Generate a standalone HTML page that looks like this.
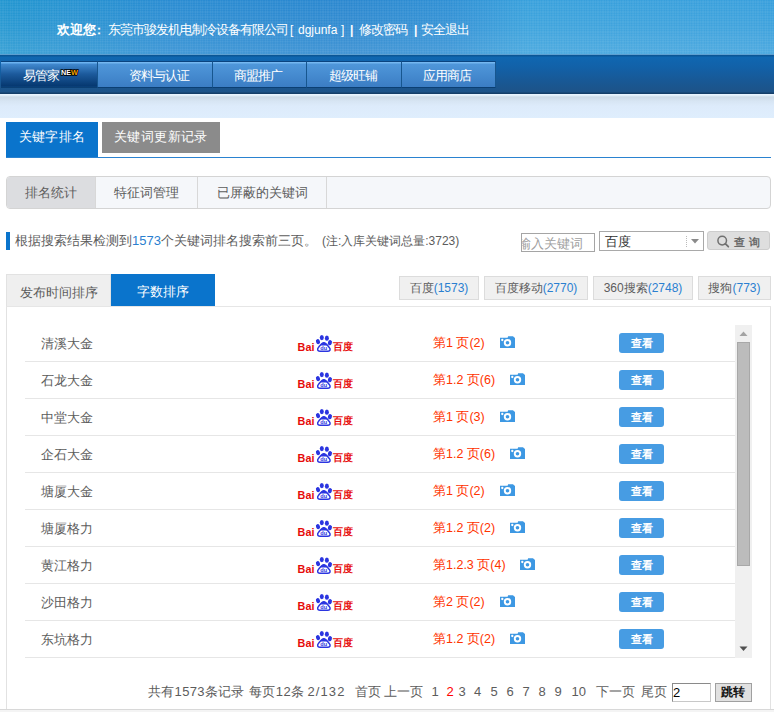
<!DOCTYPE html>
<html><head><meta charset="utf-8">
<style>
*{margin:0;padding:0;box-sizing:border-box}
html,body{width:774px;height:712px;overflow:hidden;background:#fff}
body{position:relative;font-family:"Liberation Sans",sans-serif;font-size:13px;color:#5c5c5c}
.abs{position:absolute}
#hdr{left:0;top:0;width:774px;height:55px;background:repeating-linear-gradient(90deg,rgba(255,255,255,.045) 0 1px,transparent 1px 2.5px),repeating-linear-gradient(0deg,rgba(255,255,255,.045) 0 1px,transparent 1px 2.5px),linear-gradient(180deg,rgba(255,255,255,0) 0,rgba(255,255,255,.04) 50%,rgba(255,255,255,.12) 100%),linear-gradient(90deg,#2296d0 0%,#2a8cd2 22%,#2a87cf 45%,#2e8fd4 58%,#37a0dc 68%,#389fdc 100%)}
#hdr .tx{left:57px;top:21px;color:#fff;font-size:12px;line-height:18px;white-space:nowrap}
#hline{left:0;top:54px;width:774px;height:1px;background:#5d9fd0}
#nav{left:0;top:55px;width:774px;height:39px;background:linear-gradient(180deg,#0a5696 0,#0a5696 1px,#0f67b1 2px,#1261a8 12px,#1a5690 30px,#1d5388 37px,#153f69 38px)}
.ni{top:61px;height:27px;border-top:1px solid #0a4480;border-bottom:1px solid #0b3f73;border-right:1px solid #17568f;background:linear-gradient(180deg,#74b7f0 0,#74b7f0 1px,#4f97da 2px,#3b7dc4 25px)}
.nt{top:65px;color:#fff;font-size:13px;letter-spacing:-1px;line-height:22px;white-space:nowrap}
.ni.on{background:linear-gradient(180deg,#6cb3f0 0,#6cb3f0 1px,#4189cf 2px,#1c5a9c 12px,#063870 24px,#0b4580 25px)}
#band{left:0;top:94px;width:774px;height:24px;background:linear-gradient(180deg,#e8f4ff 0,#e8f4ff 1px,#cddbe8 3px,#d7e5f3 7px,#ddebfb 12px,#dfeefd 24px)}
.t1{top:122px;height:35px;background:#0a74cc;color:#fff;font-size:13px;letter-spacing:.4px;line-height:30px;text-align:center}
.t2{top:122px;height:31px;background:#8b8b8b;color:#fff;font-size:13px;letter-spacing:.4px;line-height:30px;text-align:center}
#bl{left:6px;top:157px;width:765px;height:1px;background:#2a82d0}
#sub{left:6px;top:176px;width:765px;height:33px;border:1px solid #d4d4d4;border-radius:4px;background:#f5f7fa;overflow:hidden}
.st{top:0;height:31px;line-height:31px;text-align:center;border-right:1px solid #d8d8d8;color:#5c5c5c}
#info{left:15px;top:232px;line-height:18px;white-space:nowrap;color:#5c5c5c}
#info .b{color:#2a7fd0}
#info small{font-size:12px;margin-left:5px}
#mark{left:6px;top:232px;width:4px;height:18px;background:#0a74cc}
#kw{left:521px;top:233px;width:74px;height:19px;border:1px solid #a5a5a5;overflow:hidden;color:#a0a0a0;font-size:13px;line-height:19px;white-space:nowrap;text-indent:-4px}
#sel{left:599px;top:231px;width:105px;height:20px;border:1px solid #a9a9a9;font-size:13px;line-height:20px;padding-left:5px;color:#333}
#qbtn{left:707px;top:231px;width:63px;height:19px;border:1px solid #cdcdcd;border-radius:3px;background:#dedede;color:#555;font-size:12px;font-weight:bold;line-height:17px}
.sort{top:274px;height:32px;line-height:32px;padding-top:2px;font-size:13px;text-align:center}
.eb{top:276px;height:24px;line-height:22px;border:1px solid #dcdcdc;background:#f0f0f0;font-size:12px;text-align:center;color:#5c5c5c;white-space:nowrap}
.eb span{color:#2a7fd0}
#box{left:6px;top:306px;width:765px;height:404px;border:1px solid #e2e2e2;border-top:1px solid #e6e6e6}
.row{left:25px;width:710px;height:37px;border-bottom:1px solid #e6e6e6}
.nm{left:41px;height:36px;line-height:38px;color:#5c5c5c}
.rk{left:433px;height:36px;line-height:37px;color:#ff3300;font-size:12.5px}
.vb{left:619px;width:45px;height:20px;line-height:20px;border-radius:3px;background:#479ce3;color:#fff;font-size:11px;font-weight:bold;text-align:center}
#sb{left:735px;top:325px;width:17px;height:333px;background:#f0f0f0}
#thumb{left:737px;top:342px;width:13px;height:224px;background:#bcbcbc;border:1px solid #a8a8a8}
.pg{top:683px;line-height:18px;white-space:nowrap;color:#5c5c5c}
.pg.on{color:#f00}
#pgi{left:672px;top:683px;width:39px;height:19px;border:1px solid #8a8a8a;border-right-color:#c8c8c8;border-bottom-color:#c8c8c8;font-size:13px;color:#000;line-height:17px;padding-left:0}
#jb{left:715px;top:683px;width:37px;height:19px;border:1px solid #a0a0a0;background:#e1e1e1;font-size:12px;font-weight:bold;color:#111;line-height:17px;text-align:center;text-indent:-2px;letter-spacing:-.5px}
#btm{left:0;top:709px;width:774px;height:3px;background:#f4f4f4;border-top:1px solid #d8d8d8}
</style></head><body>
<div id="hdr" class="abs">
<div class="abs tx" style="left:57px;font-size:13px;font-weight:bold">欢迎您</div>
<div class="abs tx" style="left:93px;font-weight:bold">：</div>
<div class="abs tx" style="left:108px;font-size:13px;letter-spacing:-1px">东莞市骏发机电制冷设备有限公司</div>
<div class="abs tx" style="left:290px">[</div>
<div class="abs tx" style="left:298px">dgjunfa</div>
<div class="abs tx" style="left:341px">]</div>
<div class="abs tx" style="left:350px;font-weight:bold">|</div>
<div class="abs tx" style="left:359px;font-size:13px;letter-spacing:-1px">修改密码</div>
<div class="abs tx" style="left:414px;font-weight:bold">|</div>
<div class="abs tx" style="left:421px;font-size:13px;letter-spacing:-1px">安全退出</div>
</div>
<div id="hline" class="abs"></div>
<div id="nav" class="abs"></div>
<div class="abs ni on" style="left:1px;width:97px"></div>
<div class="abs ni" style="left:98px;width:115px"></div>
<div class="abs ni" style="left:213px;width:94px"></div>
<div class="abs ni" style="left:307px;width:95px"></div>
<div class="abs ni" style="left:402px;width:94px"></div>
<div class="abs nt" style="left:23px">易管家</div>
<div class="abs nt" style="left:129px">资料与认证</div>
<div class="abs nt" style="left:234px">商盟推广</div>
<div class="abs nt" style="left:329px">超级旺铺</div>
<div class="abs nt" style="left:423px">应用商店</div>
<svg class="abs" style="left:59px;top:68px" width="22" height="10" viewBox="0 0 22 10"><text x="2" y="7.1" font-family="Liberation Sans" font-weight="bold" font-size="6.6" fill="#fff" stroke="#000" stroke-width="1.5" paint-order="stroke" textLength="17" lengthAdjust="spacingAndGlyphs">NE<tspan fill="#f7a400">W</tspan></text></svg>
<div id="band" class="abs"></div>
<div class="abs t1" style="left:6px;width:92px">关键字排名</div>
<div class="abs t2" style="left:102px;width:118px">关键词更新记录</div>
<div id="bl" class="abs"></div>
<div id="sub" class="abs">
 <div class="abs st" style="left:0;width:89px;background:#dcdde0">排名统计</div>
 <div class="abs st" style="left:89px;width:102px">特征词管理</div>
 <div class="abs st" style="left:191px;width:129px">已屏蔽的关键词</div>
</div>
<div id="mark" class="abs"></div>
<div id="info" class="abs">根据搜索结果检测到<span class="b">1573</span>个关键词排名搜索前三页。<small>(注:入库关键词总量:3723)</small></div>
<div id="kw" class="abs">输入关键词</div>
<div id="sel" class="abs">百度</div>
<div class="abs" style="left:686px;top:236px;width:1px;height:11px;border-left:1px dotted #bbb"></div>
<svg class="abs" style="left:691px;top:239px" width="9" height="5"><path d="M0 0h8l-4 4.5z" fill="#8a8a8a"/></svg>
<div id="qbtn" class="abs"></div>
<svg class="abs" style="left:716px;top:234px" width="14" height="14" viewBox="0 0 14 14"><circle cx="6.2" cy="6.6" r="4.3" fill="none" stroke="#707070" stroke-width="1.5"/><path d="M9.3 9.7l3 3" stroke="#707070" stroke-width="1.8" stroke-linecap="round"/></svg>
<div class="abs" style="left:734px;top:233px;font-size:11px;font-weight:bold;color:#6a6a6a;line-height:18px;letter-spacing:4px">查询</div>
<div id="box" class="abs"></div>
<div class="abs sort" style="left:6px;top:274px;width:105px;height:32px;background:#efefef;border:1px solid #e2e2e2;border-bottom:none;color:#5c5c5c">发布时间排序</div>
<div class="abs sort" style="left:111px;width:104px;background:#0a74cc;color:#fff">字数排序</div>
<div class="abs eb" style="left:399px;width:80px">百度<span>(1573)</span></div>
<div class="abs eb" style="left:484px;width:104px">百度移动<span>(2770)</span></div>
<div class="abs eb" style="left:593px;width:100px">360搜索<span>(2748)</span></div>
<div class="abs eb" style="left:698px;width:73px">搜狗<span>(773)</span></div>
<div class="abs row" style="top:325px"></div>
<div class="abs nm" style="top:325px">清溪大金</div>
<svg class="abs" style="left:297px;top:334px" width="56" height="19" viewBox="0 0 56 19">
<text x="0.6" y="17" font-family="Liberation Sans" font-weight="bold" font-size="10.8" fill="#e60b0b">Bai</text>
<g fill="#2b35e0"><ellipse cx="21" cy="7.6" rx="2" ry="2.6" transform="rotate(-20 21 7.6)"/><ellipse cx="24.8" cy="3.6" rx="2" ry="2.6"/><ellipse cx="29.9" cy="4.2" rx="2" ry="2.6"/><ellipse cx="32.9" cy="8.7" rx="2" ry="2.6" transform="rotate(20 32.9 8.7)"/></g>
<path d="M26.8 8.8C24.8 8.8 23.3 11.2 21.6 13.3C19.9 15.3 20.5 17.3 22.8 17.3H31C33.3 17.3 33.8 15.3 32.1 13.3C30.4 11.2 28.8 8.8 26.8 8.8z" fill="#fff" stroke="#2b35e0" stroke-width="1.5"/>
<path d="M26.8 8.6C25.3 8.6 24.2 10 23.1 11.4H30.5C29.4 10 28.3 8.6 26.8 8.6z" fill="#2b35e0"/>
<text x="23.3" y="16.4" font-family="Liberation Sans" font-size="5.6" fill="#2b35e0" font-weight="bold">du</text>
<text x="35.5" y="16.1" font-family="Liberation Sans, sans-serif" font-size="9.5" fill="#e60b0b" font-weight="bold">百度</text></svg>
<div class="abs rk" style="top:325px">第1 页(2)</div>
<svg class="abs" style="left:500px;top:336px" width="16" height="13" viewBox="0 0 16 13">
<path d="M0 1.8h7.6l0.5-1.6h4.9l1.6 1.6h0.4v10.1H0z" fill="#3d98e3"/>
<circle cx="2.3" cy="4" r="1.15" fill="#fff"/>
<circle cx="7.5" cy="6.8" r="2.75" fill="none" stroke="#fff" stroke-width="1.9"/></svg>
<div class="abs vb" style="top:333px">查看</div>
<div class="abs row" style="top:362px"></div>
<div class="abs nm" style="top:362px">石龙大金</div>
<svg class="abs" style="left:297px;top:371px" width="56" height="19" viewBox="0 0 56 19">
<text x="0.6" y="17" font-family="Liberation Sans" font-weight="bold" font-size="10.8" fill="#e60b0b">Bai</text>
<g fill="#2b35e0"><ellipse cx="21" cy="7.6" rx="2" ry="2.6" transform="rotate(-20 21 7.6)"/><ellipse cx="24.8" cy="3.6" rx="2" ry="2.6"/><ellipse cx="29.9" cy="4.2" rx="2" ry="2.6"/><ellipse cx="32.9" cy="8.7" rx="2" ry="2.6" transform="rotate(20 32.9 8.7)"/></g>
<path d="M26.8 8.8C24.8 8.8 23.3 11.2 21.6 13.3C19.9 15.3 20.5 17.3 22.8 17.3H31C33.3 17.3 33.8 15.3 32.1 13.3C30.4 11.2 28.8 8.8 26.8 8.8z" fill="#fff" stroke="#2b35e0" stroke-width="1.5"/>
<path d="M26.8 8.6C25.3 8.6 24.2 10 23.1 11.4H30.5C29.4 10 28.3 8.6 26.8 8.6z" fill="#2b35e0"/>
<text x="23.3" y="16.4" font-family="Liberation Sans" font-size="5.6" fill="#2b35e0" font-weight="bold">du</text>
<text x="35.5" y="16.1" font-family="Liberation Sans, sans-serif" font-size="9.5" fill="#e60b0b" font-weight="bold">百度</text></svg>
<div class="abs rk" style="top:362px">第1.2 页(6)</div>
<svg class="abs" style="left:510px;top:373px" width="16" height="13" viewBox="0 0 16 13">
<path d="M0 1.8h7.6l0.5-1.6h4.9l1.6 1.6h0.4v10.1H0z" fill="#3d98e3"/>
<circle cx="2.3" cy="4" r="1.15" fill="#fff"/>
<circle cx="7.5" cy="6.8" r="2.75" fill="none" stroke="#fff" stroke-width="1.9"/></svg>
<div class="abs vb" style="top:370px">查看</div>
<div class="abs row" style="top:399px"></div>
<div class="abs nm" style="top:399px">中堂大金</div>
<svg class="abs" style="left:297px;top:408px" width="56" height="19" viewBox="0 0 56 19">
<text x="0.6" y="17" font-family="Liberation Sans" font-weight="bold" font-size="10.8" fill="#e60b0b">Bai</text>
<g fill="#2b35e0"><ellipse cx="21" cy="7.6" rx="2" ry="2.6" transform="rotate(-20 21 7.6)"/><ellipse cx="24.8" cy="3.6" rx="2" ry="2.6"/><ellipse cx="29.9" cy="4.2" rx="2" ry="2.6"/><ellipse cx="32.9" cy="8.7" rx="2" ry="2.6" transform="rotate(20 32.9 8.7)"/></g>
<path d="M26.8 8.8C24.8 8.8 23.3 11.2 21.6 13.3C19.9 15.3 20.5 17.3 22.8 17.3H31C33.3 17.3 33.8 15.3 32.1 13.3C30.4 11.2 28.8 8.8 26.8 8.8z" fill="#fff" stroke="#2b35e0" stroke-width="1.5"/>
<path d="M26.8 8.6C25.3 8.6 24.2 10 23.1 11.4H30.5C29.4 10 28.3 8.6 26.8 8.6z" fill="#2b35e0"/>
<text x="23.3" y="16.4" font-family="Liberation Sans" font-size="5.6" fill="#2b35e0" font-weight="bold">du</text>
<text x="35.5" y="16.1" font-family="Liberation Sans, sans-serif" font-size="9.5" fill="#e60b0b" font-weight="bold">百度</text></svg>
<div class="abs rk" style="top:399px">第1 页(3)</div>
<svg class="abs" style="left:500px;top:410px" width="16" height="13" viewBox="0 0 16 13">
<path d="M0 1.8h7.6l0.5-1.6h4.9l1.6 1.6h0.4v10.1H0z" fill="#3d98e3"/>
<circle cx="2.3" cy="4" r="1.15" fill="#fff"/>
<circle cx="7.5" cy="6.8" r="2.75" fill="none" stroke="#fff" stroke-width="1.9"/></svg>
<div class="abs vb" style="top:407px">查看</div>
<div class="abs row" style="top:436px"></div>
<div class="abs nm" style="top:436px">企石大金</div>
<svg class="abs" style="left:297px;top:445px" width="56" height="19" viewBox="0 0 56 19">
<text x="0.6" y="17" font-family="Liberation Sans" font-weight="bold" font-size="10.8" fill="#e60b0b">Bai</text>
<g fill="#2b35e0"><ellipse cx="21" cy="7.6" rx="2" ry="2.6" transform="rotate(-20 21 7.6)"/><ellipse cx="24.8" cy="3.6" rx="2" ry="2.6"/><ellipse cx="29.9" cy="4.2" rx="2" ry="2.6"/><ellipse cx="32.9" cy="8.7" rx="2" ry="2.6" transform="rotate(20 32.9 8.7)"/></g>
<path d="M26.8 8.8C24.8 8.8 23.3 11.2 21.6 13.3C19.9 15.3 20.5 17.3 22.8 17.3H31C33.3 17.3 33.8 15.3 32.1 13.3C30.4 11.2 28.8 8.8 26.8 8.8z" fill="#fff" stroke="#2b35e0" stroke-width="1.5"/>
<path d="M26.8 8.6C25.3 8.6 24.2 10 23.1 11.4H30.5C29.4 10 28.3 8.6 26.8 8.6z" fill="#2b35e0"/>
<text x="23.3" y="16.4" font-family="Liberation Sans" font-size="5.6" fill="#2b35e0" font-weight="bold">du</text>
<text x="35.5" y="16.1" font-family="Liberation Sans, sans-serif" font-size="9.5" fill="#e60b0b" font-weight="bold">百度</text></svg>
<div class="abs rk" style="top:436px">第1.2 页(6)</div>
<svg class="abs" style="left:510px;top:447px" width="16" height="13" viewBox="0 0 16 13">
<path d="M0 1.8h7.6l0.5-1.6h4.9l1.6 1.6h0.4v10.1H0z" fill="#3d98e3"/>
<circle cx="2.3" cy="4" r="1.15" fill="#fff"/>
<circle cx="7.5" cy="6.8" r="2.75" fill="none" stroke="#fff" stroke-width="1.9"/></svg>
<div class="abs vb" style="top:444px">查看</div>
<div class="abs row" style="top:473px"></div>
<div class="abs nm" style="top:473px">塘厦大金</div>
<svg class="abs" style="left:297px;top:482px" width="56" height="19" viewBox="0 0 56 19">
<text x="0.6" y="17" font-family="Liberation Sans" font-weight="bold" font-size="10.8" fill="#e60b0b">Bai</text>
<g fill="#2b35e0"><ellipse cx="21" cy="7.6" rx="2" ry="2.6" transform="rotate(-20 21 7.6)"/><ellipse cx="24.8" cy="3.6" rx="2" ry="2.6"/><ellipse cx="29.9" cy="4.2" rx="2" ry="2.6"/><ellipse cx="32.9" cy="8.7" rx="2" ry="2.6" transform="rotate(20 32.9 8.7)"/></g>
<path d="M26.8 8.8C24.8 8.8 23.3 11.2 21.6 13.3C19.9 15.3 20.5 17.3 22.8 17.3H31C33.3 17.3 33.8 15.3 32.1 13.3C30.4 11.2 28.8 8.8 26.8 8.8z" fill="#fff" stroke="#2b35e0" stroke-width="1.5"/>
<path d="M26.8 8.6C25.3 8.6 24.2 10 23.1 11.4H30.5C29.4 10 28.3 8.6 26.8 8.6z" fill="#2b35e0"/>
<text x="23.3" y="16.4" font-family="Liberation Sans" font-size="5.6" fill="#2b35e0" font-weight="bold">du</text>
<text x="35.5" y="16.1" font-family="Liberation Sans, sans-serif" font-size="9.5" fill="#e60b0b" font-weight="bold">百度</text></svg>
<div class="abs rk" style="top:473px">第1 页(2)</div>
<svg class="abs" style="left:500px;top:484px" width="16" height="13" viewBox="0 0 16 13">
<path d="M0 1.8h7.6l0.5-1.6h4.9l1.6 1.6h0.4v10.1H0z" fill="#3d98e3"/>
<circle cx="2.3" cy="4" r="1.15" fill="#fff"/>
<circle cx="7.5" cy="6.8" r="2.75" fill="none" stroke="#fff" stroke-width="1.9"/></svg>
<div class="abs vb" style="top:481px">查看</div>
<div class="abs row" style="top:510px"></div>
<div class="abs nm" style="top:510px">塘厦格力</div>
<svg class="abs" style="left:297px;top:519px" width="56" height="19" viewBox="0 0 56 19">
<text x="0.6" y="17" font-family="Liberation Sans" font-weight="bold" font-size="10.8" fill="#e60b0b">Bai</text>
<g fill="#2b35e0"><ellipse cx="21" cy="7.6" rx="2" ry="2.6" transform="rotate(-20 21 7.6)"/><ellipse cx="24.8" cy="3.6" rx="2" ry="2.6"/><ellipse cx="29.9" cy="4.2" rx="2" ry="2.6"/><ellipse cx="32.9" cy="8.7" rx="2" ry="2.6" transform="rotate(20 32.9 8.7)"/></g>
<path d="M26.8 8.8C24.8 8.8 23.3 11.2 21.6 13.3C19.9 15.3 20.5 17.3 22.8 17.3H31C33.3 17.3 33.8 15.3 32.1 13.3C30.4 11.2 28.8 8.8 26.8 8.8z" fill="#fff" stroke="#2b35e0" stroke-width="1.5"/>
<path d="M26.8 8.6C25.3 8.6 24.2 10 23.1 11.4H30.5C29.4 10 28.3 8.6 26.8 8.6z" fill="#2b35e0"/>
<text x="23.3" y="16.4" font-family="Liberation Sans" font-size="5.6" fill="#2b35e0" font-weight="bold">du</text>
<text x="35.5" y="16.1" font-family="Liberation Sans, sans-serif" font-size="9.5" fill="#e60b0b" font-weight="bold">百度</text></svg>
<div class="abs rk" style="top:510px">第1.2 页(2)</div>
<svg class="abs" style="left:510px;top:521px" width="16" height="13" viewBox="0 0 16 13">
<path d="M0 1.8h7.6l0.5-1.6h4.9l1.6 1.6h0.4v10.1H0z" fill="#3d98e3"/>
<circle cx="2.3" cy="4" r="1.15" fill="#fff"/>
<circle cx="7.5" cy="6.8" r="2.75" fill="none" stroke="#fff" stroke-width="1.9"/></svg>
<div class="abs vb" style="top:518px">查看</div>
<div class="abs row" style="top:547px"></div>
<div class="abs nm" style="top:547px">黄江格力</div>
<svg class="abs" style="left:297px;top:556px" width="56" height="19" viewBox="0 0 56 19">
<text x="0.6" y="17" font-family="Liberation Sans" font-weight="bold" font-size="10.8" fill="#e60b0b">Bai</text>
<g fill="#2b35e0"><ellipse cx="21" cy="7.6" rx="2" ry="2.6" transform="rotate(-20 21 7.6)"/><ellipse cx="24.8" cy="3.6" rx="2" ry="2.6"/><ellipse cx="29.9" cy="4.2" rx="2" ry="2.6"/><ellipse cx="32.9" cy="8.7" rx="2" ry="2.6" transform="rotate(20 32.9 8.7)"/></g>
<path d="M26.8 8.8C24.8 8.8 23.3 11.2 21.6 13.3C19.9 15.3 20.5 17.3 22.8 17.3H31C33.3 17.3 33.8 15.3 32.1 13.3C30.4 11.2 28.8 8.8 26.8 8.8z" fill="#fff" stroke="#2b35e0" stroke-width="1.5"/>
<path d="M26.8 8.6C25.3 8.6 24.2 10 23.1 11.4H30.5C29.4 10 28.3 8.6 26.8 8.6z" fill="#2b35e0"/>
<text x="23.3" y="16.4" font-family="Liberation Sans" font-size="5.6" fill="#2b35e0" font-weight="bold">du</text>
<text x="35.5" y="16.1" font-family="Liberation Sans, sans-serif" font-size="9.5" fill="#e60b0b" font-weight="bold">百度</text></svg>
<div class="abs rk" style="top:547px">第1.2.3 页(4)</div>
<svg class="abs" style="left:520px;top:558px" width="16" height="13" viewBox="0 0 16 13">
<path d="M0 1.8h7.6l0.5-1.6h4.9l1.6 1.6h0.4v10.1H0z" fill="#3d98e3"/>
<circle cx="2.3" cy="4" r="1.15" fill="#fff"/>
<circle cx="7.5" cy="6.8" r="2.75" fill="none" stroke="#fff" stroke-width="1.9"/></svg>
<div class="abs vb" style="top:555px">查看</div>
<div class="abs row" style="top:584px"></div>
<div class="abs nm" style="top:584px">沙田格力</div>
<svg class="abs" style="left:297px;top:593px" width="56" height="19" viewBox="0 0 56 19">
<text x="0.6" y="17" font-family="Liberation Sans" font-weight="bold" font-size="10.8" fill="#e60b0b">Bai</text>
<g fill="#2b35e0"><ellipse cx="21" cy="7.6" rx="2" ry="2.6" transform="rotate(-20 21 7.6)"/><ellipse cx="24.8" cy="3.6" rx="2" ry="2.6"/><ellipse cx="29.9" cy="4.2" rx="2" ry="2.6"/><ellipse cx="32.9" cy="8.7" rx="2" ry="2.6" transform="rotate(20 32.9 8.7)"/></g>
<path d="M26.8 8.8C24.8 8.8 23.3 11.2 21.6 13.3C19.9 15.3 20.5 17.3 22.8 17.3H31C33.3 17.3 33.8 15.3 32.1 13.3C30.4 11.2 28.8 8.8 26.8 8.8z" fill="#fff" stroke="#2b35e0" stroke-width="1.5"/>
<path d="M26.8 8.6C25.3 8.6 24.2 10 23.1 11.4H30.5C29.4 10 28.3 8.6 26.8 8.6z" fill="#2b35e0"/>
<text x="23.3" y="16.4" font-family="Liberation Sans" font-size="5.6" fill="#2b35e0" font-weight="bold">du</text>
<text x="35.5" y="16.1" font-family="Liberation Sans, sans-serif" font-size="9.5" fill="#e60b0b" font-weight="bold">百度</text></svg>
<div class="abs rk" style="top:584px">第2 页(2)</div>
<svg class="abs" style="left:500px;top:595px" width="16" height="13" viewBox="0 0 16 13">
<path d="M0 1.8h7.6l0.5-1.6h4.9l1.6 1.6h0.4v10.1H0z" fill="#3d98e3"/>
<circle cx="2.3" cy="4" r="1.15" fill="#fff"/>
<circle cx="7.5" cy="6.8" r="2.75" fill="none" stroke="#fff" stroke-width="1.9"/></svg>
<div class="abs vb" style="top:592px">查看</div>
<div class="abs row" style="top:621px"></div>
<div class="abs nm" style="top:621px">东坑格力</div>
<svg class="abs" style="left:297px;top:630px" width="56" height="19" viewBox="0 0 56 19">
<text x="0.6" y="17" font-family="Liberation Sans" font-weight="bold" font-size="10.8" fill="#e60b0b">Bai</text>
<g fill="#2b35e0"><ellipse cx="21" cy="7.6" rx="2" ry="2.6" transform="rotate(-20 21 7.6)"/><ellipse cx="24.8" cy="3.6" rx="2" ry="2.6"/><ellipse cx="29.9" cy="4.2" rx="2" ry="2.6"/><ellipse cx="32.9" cy="8.7" rx="2" ry="2.6" transform="rotate(20 32.9 8.7)"/></g>
<path d="M26.8 8.8C24.8 8.8 23.3 11.2 21.6 13.3C19.9 15.3 20.5 17.3 22.8 17.3H31C33.3 17.3 33.8 15.3 32.1 13.3C30.4 11.2 28.8 8.8 26.8 8.8z" fill="#fff" stroke="#2b35e0" stroke-width="1.5"/>
<path d="M26.8 8.6C25.3 8.6 24.2 10 23.1 11.4H30.5C29.4 10 28.3 8.6 26.8 8.6z" fill="#2b35e0"/>
<text x="23.3" y="16.4" font-family="Liberation Sans" font-size="5.6" fill="#2b35e0" font-weight="bold">du</text>
<text x="35.5" y="16.1" font-family="Liberation Sans, sans-serif" font-size="9.5" fill="#e60b0b" font-weight="bold">百度</text></svg>
<div class="abs rk" style="top:621px">第1.2 页(2)</div>
<svg class="abs" style="left:510px;top:632px" width="16" height="13" viewBox="0 0 16 13">
<path d="M0 1.8h7.6l0.5-1.6h4.9l1.6 1.6h0.4v10.1H0z" fill="#3d98e3"/>
<circle cx="2.3" cy="4" r="1.15" fill="#fff"/>
<circle cx="7.5" cy="6.8" r="2.75" fill="none" stroke="#fff" stroke-width="1.9"/></svg>
<div class="abs vb" style="top:629px">查看</div>
<div id="sb" class="abs"></div>
<svg class="abs" style="left:739px;top:331px" width="9" height="6"><path d="M0.5 5h8l-4-4.5z" fill="#a3a3a3"/></svg>
<div id="thumb" class="abs"></div>
<svg class="abs" style="left:739px;top:646px" width="9" height="6"><path d="M0.5 0.5h8l-4 4.5z" fill="#505050"/></svg>
<div class="abs pg" style="left:148px;letter-spacing:.3px">共有1573条记录</div>
<div class="abs pg" style="left:248.5px;letter-spacing:.6px">每页12条</div>
<div class="abs pg" style="left:307.5px;letter-spacing:1.1px">2/132</div>
<div class="abs pg" style="left:354.5px">首页</div>
<div class="abs pg" style="left:384px">上一页</div>
<div class="abs pg" style="left:431.5px">1</div>
<div class="abs pg on" style="left:446.5px">2</div>
<div class="abs pg" style="left:458.5px">3</div>
<div class="abs pg" style="left:474px">4</div>
<div class="abs pg" style="left:490.5px">5</div>
<div class="abs pg" style="left:506.5px">6</div>
<div class="abs pg" style="left:522.5px">7</div>
<div class="abs pg" style="left:538.5px">8</div>
<div class="abs pg" style="left:554.5px">9</div>
<div class="abs pg" style="left:571.5px">10</div>
<div class="abs pg" style="left:596px">下一页</div>
<div class="abs pg" style="left:641px">尾页</div>
<div id="pgi" class="abs">2</div>
<div id="jb" class="abs">跳转</div>
<div id="btm" class="abs"></div>
</body></html>
